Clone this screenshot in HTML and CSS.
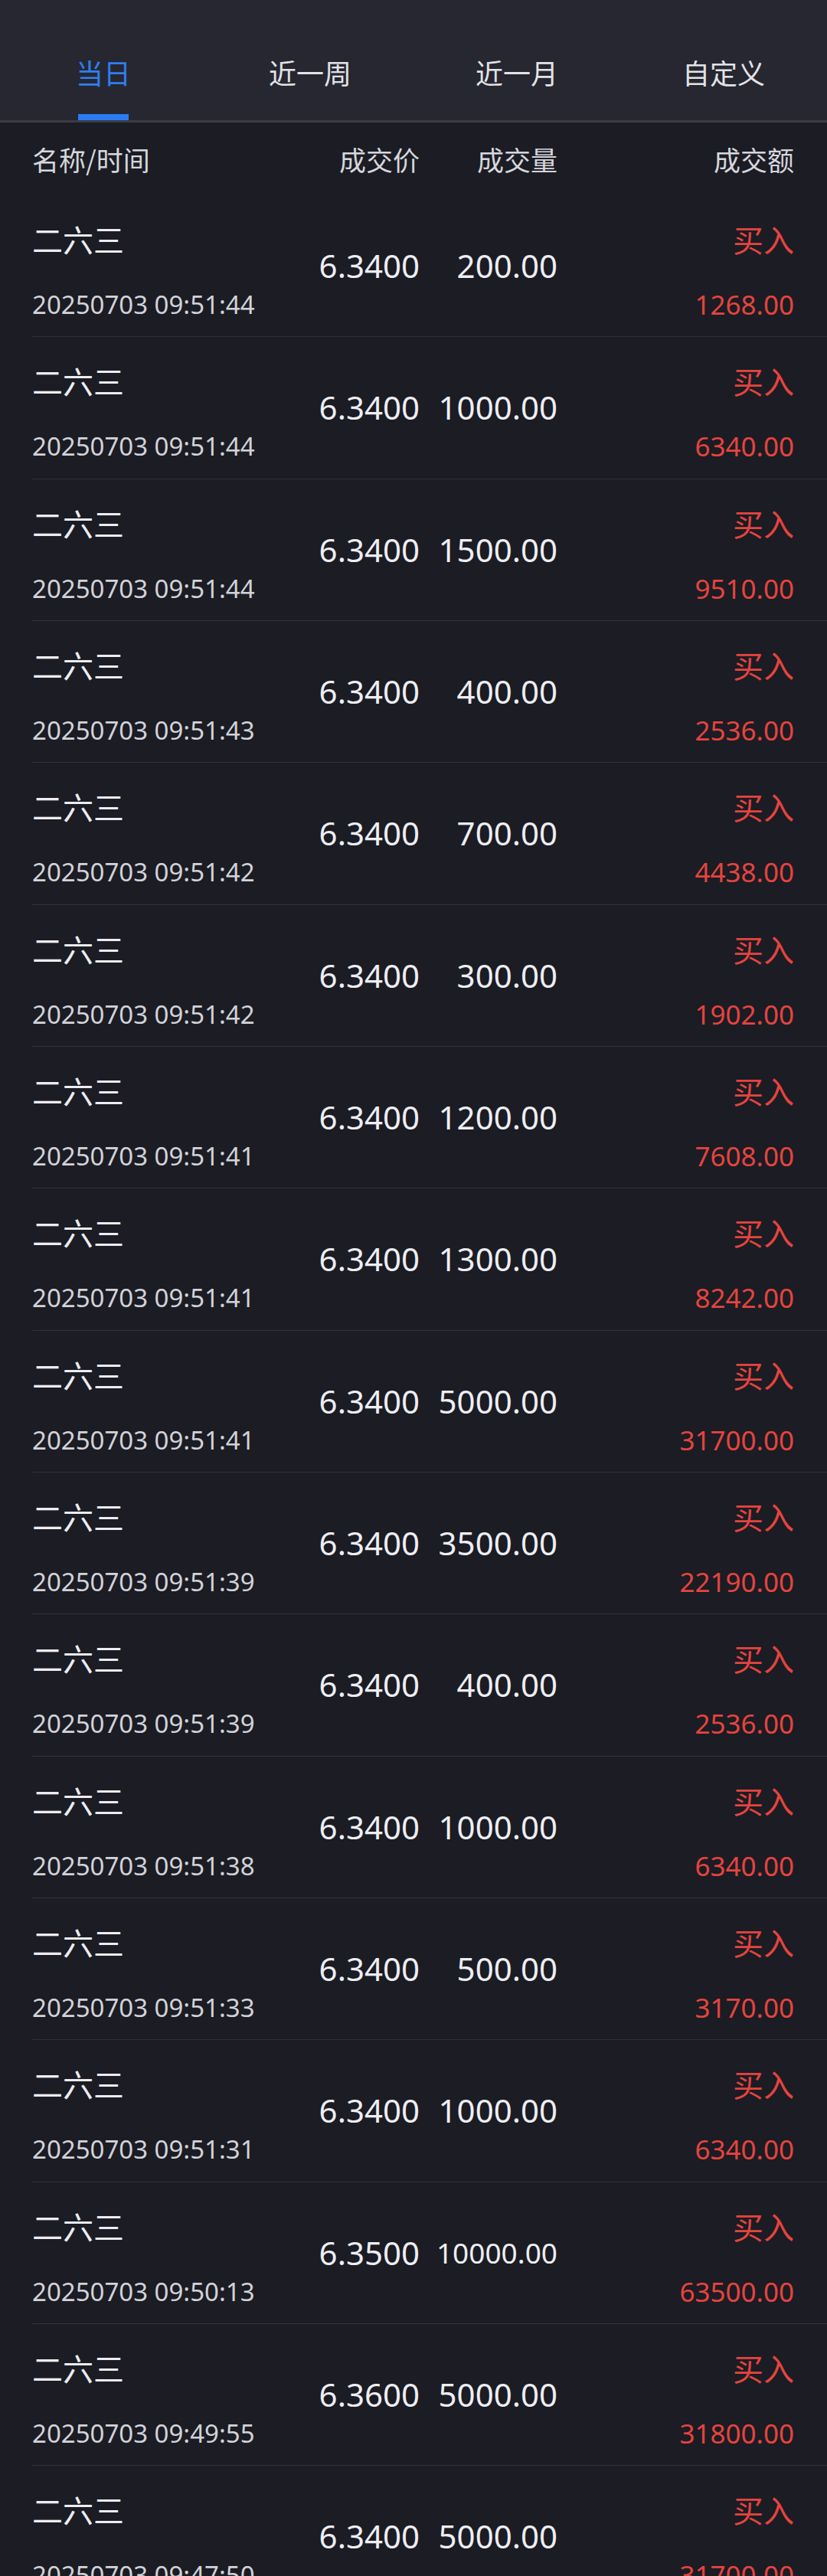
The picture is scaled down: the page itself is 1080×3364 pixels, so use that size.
FILE: index.html
```html
<!DOCTYPE html>
<html lang="zh-CN">
<head>
<meta charset="utf-8">
<title>成交明细</title>
<link rel="stylesheet" href="styles.css">
</head>
<body>
<div class="page">
  <nav class="tabs">
    <div class="tab active"><span class="tab-label">当日</span><span class="tab-bar"></span></div>
    <div class="tab"><span class="tab-label">近一周</span><span class="tab-bar"></span></div>
    <div class="tab"><span class="tab-label">近一月</span><span class="tab-bar"></span></div>
    <div class="tab"><span class="tab-label">自定义</span><span class="tab-bar"></span></div>
  </nav>
  <div class="head">
    <div class="h-name">名称/时间</div>
    <div class="h-num">成交价</div>
    <div class="h-num">成交量</div>
    <div class="h-num">成交额</div>
  </div>
  <div class="list">
    <div class="row"><div class="info"><div class="name">二六三</div><div class="time">20250703 09:51:44</div></div><div class="num">6.3400</div><div class="num">200.00</div><div class="amt"><div class="side">买入</div><div class="money">1268.00</div></div></div>
    <div class="row"><div class="info"><div class="name">二六三</div><div class="time">20250703 09:51:44</div></div><div class="num">6.3400</div><div class="num">1000.00</div><div class="amt"><div class="side">买入</div><div class="money">6340.00</div></div></div>
    <div class="row"><div class="info"><div class="name">二六三</div><div class="time">20250703 09:51:44</div></div><div class="num">6.3400</div><div class="num">1500.00</div><div class="amt"><div class="side">买入</div><div class="money">9510.00</div></div></div>
    <div class="row"><div class="info"><div class="name">二六三</div><div class="time">20250703 09:51:43</div></div><div class="num">6.3400</div><div class="num">400.00</div><div class="amt"><div class="side">买入</div><div class="money">2536.00</div></div></div>
    <div class="row"><div class="info"><div class="name">二六三</div><div class="time">20250703 09:51:42</div></div><div class="num">6.3400</div><div class="num">700.00</div><div class="amt"><div class="side">买入</div><div class="money">4438.00</div></div></div>
    <div class="row"><div class="info"><div class="name">二六三</div><div class="time">20250703 09:51:42</div></div><div class="num">6.3400</div><div class="num">300.00</div><div class="amt"><div class="side">买入</div><div class="money">1902.00</div></div></div>
    <div class="row"><div class="info"><div class="name">二六三</div><div class="time">20250703 09:51:41</div></div><div class="num">6.3400</div><div class="num">1200.00</div><div class="amt"><div class="side">买入</div><div class="money">7608.00</div></div></div>
    <div class="row"><div class="info"><div class="name">二六三</div><div class="time">20250703 09:51:41</div></div><div class="num">6.3400</div><div class="num">1300.00</div><div class="amt"><div class="side">买入</div><div class="money">8242.00</div></div></div>
    <div class="row"><div class="info"><div class="name">二六三</div><div class="time">20250703 09:51:41</div></div><div class="num">6.3400</div><div class="num">5000.00</div><div class="amt"><div class="side">买入</div><div class="money">31700.00</div></div></div>
    <div class="row"><div class="info"><div class="name">二六三</div><div class="time">20250703 09:51:39</div></div><div class="num">6.3400</div><div class="num">3500.00</div><div class="amt"><div class="side">买入</div><div class="money">22190.00</div></div></div>
    <div class="row"><div class="info"><div class="name">二六三</div><div class="time">20250703 09:51:39</div></div><div class="num">6.3400</div><div class="num">400.00</div><div class="amt"><div class="side">买入</div><div class="money">2536.00</div></div></div>
    <div class="row"><div class="info"><div class="name">二六三</div><div class="time">20250703 09:51:38</div></div><div class="num">6.3400</div><div class="num">1000.00</div><div class="amt"><div class="side">买入</div><div class="money">6340.00</div></div></div>
    <div class="row"><div class="info"><div class="name">二六三</div><div class="time">20250703 09:51:33</div></div><div class="num">6.3400</div><div class="num">500.00</div><div class="amt"><div class="side">买入</div><div class="money">3170.00</div></div></div>
    <div class="row"><div class="info"><div class="name">二六三</div><div class="time">20250703 09:51:31</div></div><div class="num">6.3400</div><div class="num">1000.00</div><div class="amt"><div class="side">买入</div><div class="money">6340.00</div></div></div>
    <div class="row"><div class="info"><div class="name">二六三</div><div class="time">20250703 09:50:13</div></div><div class="num">6.3500</div><div class="num num-fit">10000.00</div><div class="amt"><div class="side">买入</div><div class="money">63500.00</div></div></div>
    <div class="row"><div class="info"><div class="name">二六三</div><div class="time">20250703 09:49:55</div></div><div class="num">6.3600</div><div class="num">5000.00</div><div class="amt"><div class="side">买入</div><div class="money">31800.00</div></div></div>
    <div class="row"><div class="info"><div class="name">二六三</div><div class="time">20250703 09:47:50</div></div><div class="num">6.3400</div><div class="num">5000.00</div><div class="amt"><div class="side">买入</div><div class="money">31700.00</div></div></div>
  </div>
</div>
</body>
</html>
```

FILE: styles.css
```css
html, body {
  margin: 0;
  padding: 0;
  background: #1b1c24;
}

body {
  font-family: "Noto Sans", "Noto Sans CJK SC", sans-serif;
  color: #e8e8ee;
}

.page {
  width: 1080px;
  background: #1b1c24;
}

/* tabs */
.tabs {
  display: grid;
  grid-template-columns: repeat(4, 1fr);
  height: 157px;
  background: #262730;
  border-bottom: 3px solid #3b3c45;
}

.tab {
  display: flex;
  flex-direction: column;
  align-items: center;
  padding-top: 69px;
}

.tab-label {
  font-family: "Noto Sans CJK SC", sans-serif;
  font-size: 36px;
  line-height: 50px;
  color: #e2e2e8;
}

.tab-bar {
  width: 66px;
  height: 8px;
  margin-top: 30px;
  background: transparent;
}

.tab.active .tab-label {
  color: #2f7ef0;
}

.tab.active .tab-bar {
  background: #2b7cf2;
}

/* header */
.head,
.row {
  display: grid;
  grid-template-columns: 346px 160px 180px 1fr;
  margin-left: 42px;
  padding-right: 43px;
  box-sizing: border-box;
}

.head {
  height: 95px;
  align-items: center;
  font-family: "Noto Sans CJK SC", sans-serif;
  font-size: 35px;
  color: #d6d6dc;
}

.h-num {
  text-align: right;
}

/* rows */
.row {
  height: 185.33px;
  border-bottom: 1px solid #30313a;
  align-items: center;
}

.info,
.amt {
  align-self: stretch;
  display: flex;
  flex-direction: column;
  padding-top: 33px;
}

.amt {
  align-items: flex-end;
}

.name,
.side {
  font-family: "Noto Sans CJK SC", sans-serif;
  font-size: 40px;
  line-height: 48px;
}

.name {
  color: #ececf2;
}

.side {
  color: #e5443e;
}

.time,
.money {
  font-size: 33px;
  line-height: 40px;
  margin-top: 42px;
  white-space: nowrap;
}

.time {
  color: #d2d2d8;
}

.money {
  color: #e5443e;
  font-size: 35px;
}

.num {
  text-align: right;
  font-size: 42px;
  line-height: 1;
  color: #eeeef3;
  white-space: nowrap;
}

.num-fit {
  font-size: 37px;
}
```
